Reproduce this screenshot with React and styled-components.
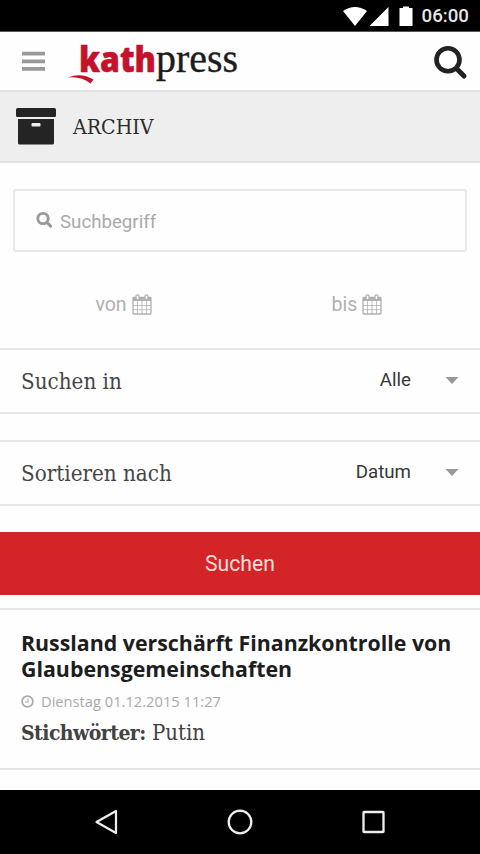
import styled, { createGlobalStyle } from "styled-components";

const sans = `Roboto, "Liberation Sans", sans-serif`;
const slab = `"Roboto Slab", "DejaVu Serif Condensed", "DejaVu Serif", serif`;

const GlobalStyle = createGlobalStyle`
	* {
		box-sizing: border-box;
	}
	body {
		margin: 0;
		background: #ffffff;
		font-family: ${sans};
	}
`;

const Screen = styled.div`
	display: flex;
	flex-direction: column;
	width: 480px;
	height: 854px;
	overflow: hidden;
	background: #fefefe;
`;

const StatusBar = styled.div`
	display: flex;
	align-items: center;
	justify-content: flex-end;
	flex: none;
	height: 32px;
	padding-right: 11px;
	background: #000000;
	border-bottom: 1px solid #555555;
`;

const Time = styled.span`
	margin-left: 8px;
	padding-top: 2px;
	color: #e6e6e6;
	font-size: 18.7px;
	font-weight: 500;
	line-height: 29px;
`;

const Header = styled.header`
	display: flex;
	align-items: flex-start;
	flex: none;
	height: 60px;
	padding: 0 12px 0 22px;
	border-bottom: 2px solid #e2e2e2;
`;

const MenuIcon = styled.svg`
	margin-top: 19px;
`;

const Logo = styled.svg`
	margin: 0 auto 0 21px;
`;

const SearchIcon = styled.svg`
	margin-top: 12px;
`;

const TitleBar = styled.div`
	display: flex;
	align-items: center;
	flex: none;
	height: 71px;
	padding: 0 16px;
	gap: 17px;
	background: #eeeeee;
	border-bottom: 2px solid #e3e3e3;
`;

const Title = styled.h1`
	margin: 0;
	padding-bottom: 1px;
	color: #2c2c2c;
	font-family: ${slab};
	font-size: 21.2px;
	font-weight: 400;
`;

const SearchBox = styled.div`
	display: flex;
	align-items: center;
	flex: none;
	height: 63px;
	margin: 26px 13px 0;
	padding-left: 21px;
	gap: 7px;
	border: 2px solid #e7e7e7;
	border-radius: 3px;
	color: #aaaaaa;
	font-size: 18.7px;
`;

const SearchTerm = styled.span`
	padding-top: 2px;
`;

const Dates = styled.div`
	display: grid;
	grid-template-columns: 247px 220px;
	flex: none;
	height: 96px;
`;

const DateField = styled.div`
	display: flex;
	align-items: center;
	justify-content: center;
	gap: 5px;
	padding-top: 8px;
	color: #b0b0b0;
	font-size: 19.5px;
`;

const SelectRow = styled.div`
	display: flex;
	align-items: center;
	flex: none;
	height: 66px;
	margin-bottom: 26px;
	padding: 0 21px;
	border-top: 2px solid #e6e6e6;
	border-bottom: 2px solid #e6e6e6;
`;

const Label = styled.span`
	flex: 1;
	padding-bottom: 1px;
	color: #464646;
	font-family: ${slab};
	font-size: 22.2px;
`;

const Value = styled.span`
	margin-right: 34px;
	padding-bottom: 3px;
	color: #383838;
	font-size: 18.7px;
`;

const Button = styled.button`
	flex: none;
	height: 63px;
	padding: 0;
	border: 0;
	background: #d32427;
	color: #fbdedb;
	font-family: ${sans};
	font-size: 21.2px;
`;

const Article = styled.article`
	flex: none;
	height: 162px;
	margin-top: 13px;
	padding: 20px 21px 0;
	border-top: 2px solid #e7e7e7;
	border-bottom: 2px solid #e3e3e3;
`;

const Headline = styled.h2`
	margin: 0;
	color: #1d1d1d;
	font-family: "Open Sans", "Noto Sans", sans-serif;
	font-size: 21.35px;
	font-weight: 700;
	line-height: 25.5px;
	white-space: nowrap;
`;

const Meta = styled.div`
	display: flex;
	align-items: center;
	gap: 7px;
	height: 24px;
	margin-top: 8px;
	color: #aaaaaa;
	font-family: "Open Sans", "Noto Sans", sans-serif;
	font-size: 14.7px;
`;

const Keywords = styled.p`
	margin: 5px 0 0;
	color: #424242;
	font-family: ${slab};
	font-size: 22px;
	line-height: 30px;

	b {
		font-size: 21px;
		letter-spacing: -0.55px;
	}
`;

const NavBar = styled.nav`
	display: flex;
	align-items: center;
	justify-content: center;
	flex: none;
	gap: 108px;
	height: 64px;
	margin-top: auto;
	background: #000000;
`;

const fields = ["von", "bis"];

const selects = [
	{ label: "Suchen in", value: "Alle" },
	{ label: "Sortieren nach", value: "Datum" },
];

const Calendar = () => (
	<svg width="20" height="21" viewBox="0 0 20 21" fill="none" stroke="currentColor">
		<rect x="1" y="3.5" width="18" height="16.5" rx="0.8" strokeWidth="1.3" />
		<path d="M1 3.5h18V7H1z" fill="currentColor" stroke="none" />
		<path d="M5.5 7v13M10 7v13M14.5 7v13M1 11.5h18M1 15.7h18" strokeWidth="0.8" />
		<rect x="4.1" y="0.8" width="2.9" height="4.8" rx="1.3" fill="#ffffff" strokeWidth="1.2" />
		<rect x="13" y="0.8" width="2.9" height="4.8" rx="1.3" fill="#ffffff" strokeWidth="1.2" />
	</svg>
);

const App = () => {
	return (
		<>
			<GlobalStyle />
			<Screen>
				<StatusBar>
					<svg width="71" height="22" viewBox="0 0 71 22" fill="#ffffff">
						<path d="M0 6Q12 -2 24 6L12 21z" />
						<path d="M45.500 2V21H26.500z" />
						<path d="M60 1.500h6v1.500h3.500V21H56.500V3H60z" />
					</svg>
					<Time>06:00</Time>
				</StatusBar>

				<Header>
					<MenuIcon width="23" height="21" viewBox="0 0 23 21" fill="#999999">
						<path d="M0 .8h23v3.800H0zM0 8.400h23v3.800H0zM0 16h23v3.800H0z" />
					</MenuIcon>
					<Logo width="176" height="58" viewBox="0 -8 176 58">
						<path
							d="M2 37.500Q15 32 27.500 39.500L24.500 43.500Q15 36 2 37.500z"
							fill="#c4122d"
						/>
						<text
							x="13"
							y="32"
							textLength="77"
							lengthAdjust="spacingAndGlyphs"
							fill="#c4122d"
							stroke="#c4122d"
							strokeWidth="0.5"
							fontFamily="Open Sans"
							fontSize="34.5"
							fontWeight="800">
							kath
						</text>
						<text
							x="90"
							y="32"
							textLength="82"
							lengthAdjust="spacingAndGlyphs"
							fill="#1c1c1c"
							stroke="#1c1c1c"
							strokeWidth="0.4"
							fontFamily="Liberation Serif"
							fontSize="41">
							press
						</text>
					</Logo>
					<SearchIcon width="36" height="36" viewBox="0 0 36 36" fill="none" stroke="#222222">
						<circle cx="16" cy="15.800" r="11.500" strokeWidth="4.600" />
						<path d="M25 25l7 7" strokeWidth="5" strokeLinecap="round" />
					</SearchIcon>
				</Header>

				<TitleBar>
					<svg width="40" height="37" viewBox="0 0 40 37" fill="#242424">
						<rect width="40" height="9" rx="1.500" />
						<path
							fillRule="evenodd"
							d="M2 11h36v24q0 1.500-1.500 1.500h-33Q2 36.500 2 35zM16.500 15a1 1 0 0 0-1 1v1.500a1 1 0 0 0 1 1h7a1 1 0 0 0 1-1V16a1 1 0 0 0-1-1z"
						/>
					</svg>
					<Title>ARCHIV</Title>
				</TitleBar>

				<SearchBox>
					<svg width="17" height="19" viewBox="0 0 17 19" fill="none" stroke="#999999">
						<circle cx="7" cy="7.500" r="5.200" strokeWidth="2.800" />
						<path d="M11 11.500l3.600 3.600" strokeWidth="3" strokeLinecap="round" />
					</svg>
					<SearchTerm>Suchbegriff</SearchTerm>
				</SearchBox>

				<Dates>
					{fields.map((field) => (
						<DateField key={field}>
							{field}
							<Calendar />
						</DateField>
					))}
				</Dates>

				{selects.map(({ label, value }) => (
					<SelectRow key={label}>
						<Label>{label}</Label>
						<Value>{value}</Value>
						<svg width="14" height="8" viewBox="0 0 14 8" fill="#999999">
							<path d="M0.500 0h13L7 7z" />
						</svg>
					</SelectRow>
				))}

				<Button>Suchen</Button>

				<Article>
					<Headline>
						Russland verschärft Finanzkontrolle von
						<br />
						Glaubensgemeinschaften
					</Headline>
					<Meta>
						<svg width="13" height="13" viewBox="0 0 13 13" fill="none" stroke="currentColor">
							<circle cx="6.500" cy="6.500" r="5.400" strokeWidth="1.700" />
							<path d="M7 3.500v3.500H4.200" strokeWidth="1.100" />
						</svg>
						Dienstag 01.12.2015 11:27
					</Meta>
					<Keywords>
						<b>Stichwörter:</b> Putin
					</Keywords>
				</Article>

				<NavBar>
					<svg width="26" height="28" viewBox="0 0 26 28" fill="none" stroke="#eeeeee">
						<path d="M23 3v22L3.500 14z" strokeWidth="2.200" strokeLinejoin="round" />
					</svg>
					<svg width="26" height="28" viewBox="0 0 26 28" fill="none" stroke="#eeeeee">
						<circle cx="13" cy="14" r="11.300" strokeWidth="2.300" />
					</svg>
					<svg width="26" height="28" viewBox="0 0 26 28" fill="none" stroke="#eeeeee">
						<rect x="2.500" y="4" width="20" height="20" strokeWidth="2.300" rx="0.500" />
					</svg>
				</NavBar>
			</Screen>
		</>
	);
};

export default App;
